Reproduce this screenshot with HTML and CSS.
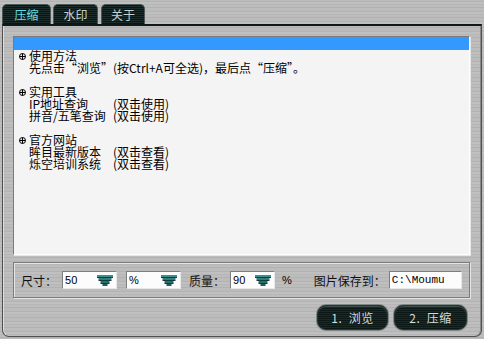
FILE: index.html
```html
<!DOCTYPE html>
<html lang="zh-CN">
<head>
<meta charset="utf-8">
<title>压缩</title>
<link rel="stylesheet" href="styles.css">
</head>
<body>
<div class="app">
  <div class="tabs">
    <div class="tab tab-1 active">压缩</div>
    <div class="tab tab-2">水印</div>
    <div class="tab tab-3">关于</div>
  </div>
  <div class="frame">
    <div class="list">
      <div class="row-selected"></div>
      <div class="group">
        <div class="head"><svg class="plus" width="7" height="7" viewBox="0 0 7 7"><circle cx="3.5" cy="3.5" r="3" fill="none" stroke="#000" stroke-width="1"/><path d="M3.5 0.5V6.5M0.5 3.5H6.5" stroke="#000" stroke-width="1"/></svg><span class="txt">使用方法</span></div>
        <div class="line"><span class="txt">先点击“浏览”(按Ctrl+A可全选)，最后点“压缩”。</span></div>
      </div>
      <div class="group">
        <div class="head"><svg class="plus" width="7" height="7" viewBox="0 0 7 7"><circle cx="3.5" cy="3.5" r="3" fill="none" stroke="#000" stroke-width="1"/><path d="M3.5 0.5V6.5M0.5 3.5H6.5" stroke="#000" stroke-width="1"/></svg><span class="txt">实用工具</span></div>
        <div class="entry"><span class="txt">IP地址查询</span><span class="txt">(双击使用)</span></div>
        <div class="entry"><span class="txt">拼音/五笔查询</span><span class="txt">(双击使用)</span></div>
      </div>
      <div class="group">
        <div class="head"><svg class="plus" width="7" height="7" viewBox="0 0 7 7"><circle cx="3.5" cy="3.5" r="3" fill="none" stroke="#000" stroke-width="1"/><path d="M3.5 0.5V6.5M0.5 3.5H6.5" stroke="#000" stroke-width="1"/></svg><span class="txt">官方网站</span></div>
        <div class="entry"><span class="txt">眸目最新版本</span><span class="txt">(双击查看)</span></div>
        <div class="entry"><span class="txt">烁空培训系统</span><span class="txt">(双击查看)</span></div>
      </div>
    </div>

    <div class="options">
      <span class="label">尺寸：</span>
      <div class="combo w55"><span>50</span><svg class="arrow" width="16" height="11" viewBox="0 0 16 11"><rect x="0" y="0" width="16" height="2" fill="#3b8f8c"/><rect x="1.5" y="3" width="13" height="2" fill="#2f7e7b"/><rect x="3.5" y="6" width="9" height="2" fill="#276e6c"/><rect x="5.5" y="9" width="5" height="2" fill="#1f5e5c"/><rect x="0" y="2" width="16" height="1" fill="#123b3a"/><rect x="1.5" y="5" width="13" height="1" fill="#123b3a"/><rect x="3.5" y="8" width="9" height="1" fill="#123b3a"/></svg></div>
      <div class="combo w55 gap-l"><span>%</span><svg class="arrow" width="16" height="11" viewBox="0 0 16 11"><rect x="0" y="0" width="16" height="2" fill="#3b8f8c"/><rect x="1.5" y="3" width="13" height="2" fill="#2f7e7b"/><rect x="3.5" y="6" width="9" height="2" fill="#276e6c"/><rect x="5.5" y="9" width="5" height="2" fill="#1f5e5c"/><rect x="0" y="2" width="16" height="1" fill="#123b3a"/><rect x="1.5" y="5" width="13" height="1" fill="#123b3a"/><rect x="3.5" y="8" width="9" height="1" fill="#123b3a"/></svg></div>
      <span class="label quality">质量：</span>
      <div class="combo w45"><span>90</span><svg class="arrow" width="16" height="11" viewBox="0 0 16 11"><rect x="0" y="0" width="16" height="2" fill="#3b8f8c"/><rect x="1.5" y="3" width="13" height="2" fill="#2f7e7b"/><rect x="3.5" y="6" width="9" height="2" fill="#276e6c"/><rect x="5.5" y="9" width="5" height="2" fill="#1f5e5c"/><rect x="0" y="2" width="16" height="1" fill="#123b3a"/><rect x="1.5" y="5" width="13" height="1" fill="#123b3a"/><rect x="3.5" y="8" width="9" height="1" fill="#123b3a"/></svg></div>
      <span class="percent">%</span>
      <span class="label save">图片保存到：</span>
      <div class="path">C:\Moumu</div>
    </div>

    <div class="buttons">
      <button class="btn btn-browse">1.&nbsp;&nbsp;浏览</button>
      <button class="btn btn-compress">2.&nbsp;&nbsp;压缩</button>
    </div>
  </div>
</div>
</body>
</html>
```
FILE: styles.css
```css
* { box-sizing: border-box; }

html, body {
  margin: 0;
  padding: 0;
}

body {
  width: 484px;
  height: 339px;
  overflow: hidden;
  font-family: "Noto Sans CJK SC", "Liberation Sans", sans-serif;
  font-size: 12px;
  color: #000;
  background-color: #b9b9b9;
  background-image:
    repeating-linear-gradient(180deg,
      #bbbbbb 0px, #bbbbbb 1px,
      #b3b3b3 1px, #b3b3b3 2px,
      #c0c0c0 2px, #c0c0c0 4px,
      #b6b6b6 4px, #b6b6b6 5px,
      #bdbdbd 5px, #bdbdbd 7px,
      #b1b1b1 7px, #b1b1b1 8px,
      #bcbcbc 8px, #bcbcbc 10px);
}

.app {
  width: 484px;
  height: 339px;
  display: flex;
  flex-direction: column;
}

/* ---------- tabs ---------- */
.tabs {
  display: flex;
  gap: 2px;
  height: 24px;
  padding: 4px 0 0 2px;
}

.tab {
  height: 20px;
  line-height: 19px;
  text-align: center;
  font-size: 12px;
  color: #c9d2d1;
  border: 1px solid #4b5856;
  border-bottom: none;
  border-radius: 5px 5px 0 0;
  background-color: #0e1b19;
  background-image:
    repeating-linear-gradient(180deg,
      #0b1614 0px, #0b1614 1px,
      #1c2c2a 1px, #1c2c2a 2px);
}

.tab-1 { width: 49px; }
.tab-2 { width: 45px; }
.tab-3 { width: 44px; margin-left: 1px; }

.tab.active { color: #5fe0ea; }

/* ---------- frame ---------- */
.frame {
  margin: 0 2px 2px 2px;
  flex: 1;
  border-top: 2px solid #0d1817;
  border-left: 1px solid #505050;
  border-right: 1px solid #505050;
  border-bottom: 1px solid #505050;
  border-radius: 0 0 7px 7px;
  box-shadow: inset 1px 0 0 #dcdcdc, inset -1px 0 0 #8a8a8a;
  padding: 10px 11px 0 10px;
  display: flex;
  flex-direction: column;
}

/* ---------- list ---------- */
.list {
  height: 219px;
  background: #f4f4f4;
  border: 1px solid;
  border-color: #7a7a7a #ffffff #ffffff #7a7a7a;
  box-shadow: 1px 1px 0 #e6e6e6;
  line-height: 12px;
  font-size: 12px;
}

.row-selected {
  height: 13px;
  background: #3399ff;
}

.group {
  padding-left: 5px;
  margin-bottom: 12px;
}

.head {
  display: flex;
  align-items: center;
  height: 12px;
}

.txt {
  display: inline-block;
  height: 12px;
  line-height: 12px;
  overflow: visible;
}

.plus {
  margin-right: 3px;
  margin-top: 1px;
  flex: none;
}

.line {
  padding-left: 10px;
  height: 12px;
  white-space: nowrap;
}

.entry {
  padding-left: 10px;
  height: 12px;
  display: grid;
  grid-template-columns: 84px auto;
  white-space: nowrap;
}

/* ---------- options group ---------- */
.options {
  margin-top: 7px;
  height: 36px;
  border: 1px solid #7c7c7c;
  box-shadow: inset 1px 1px 0 #e4e4e4, 1px 1px 0 #e4e4e4;
  display: flex;
  align-items: center;
  padding: 0 0 0 7px;
}

.label {
  color: #111;
  white-space: nowrap;
}

.combo {
  height: 18px;
  margin-left: 5px;
  background: #fcfcfc;
  border: 1px solid;
  border-color: #7e7e7e #e8e8e8 #e8e8e8 #7e7e7e;
  display: flex;
  align-items: center;
  justify-content: space-between;
  padding: 0 3px 0 2px;
  font-family: "Liberation Sans", "Noto Sans", sans-serif;
  font-size: 11px;
}

.w55 { width: 55px; }
.w45 { width: 45px; }
.gap-l { margin-left: 9px; }

.arrow { flex: none; }

.quality { margin-left: 8px; }

.percent {
  margin-left: 7px;
  font-family: "Liberation Sans", sans-serif;
  font-size: 11px;
}

.save { margin-left: 22px; }

.path {
  width: 73px;
  height: 18px;
  margin-left: 3px;
  background: #fcfcfc;
  border: 1px solid;
  border-color: #7e7e7e #e8e8e8 #e8e8e8 #7e7e7e;
  padding: 0 0 0 2px;
  font-family: "Liberation Mono", monospace;
  font-size: 11px;
  line-height: 16px;
}

/* ---------- buttons ---------- */
.buttons {
  margin-top: 7px;
  display: flex;
  justify-content: flex-end;
  gap: 6px;
  padding-right: 3px;
}

.btn {
  height: 25px;
  padding: 0;
  border: 1px solid #2a3432;
  border-radius: 9px;
  box-shadow: 0 0 0 1px #7f8786, inset 0 1px 0 #3c4d4a;
  color: #d4dcdb;
  font-family: "Noto Sans CJK SC", "Liberation Sans", sans-serif;
  font-size: 12px;
  line-height: 22px;
  letter-spacing: 0.5px;
  background-color: #0e1c1a;
  background-image:
    repeating-linear-gradient(180deg,
      #0c1816 0px, #0c1816 1px,
      #1a2a28 1px, #1a2a28 2px);
}

.btn-browse { width: 71px; }
.btn-compress { width: 73px; }
```
